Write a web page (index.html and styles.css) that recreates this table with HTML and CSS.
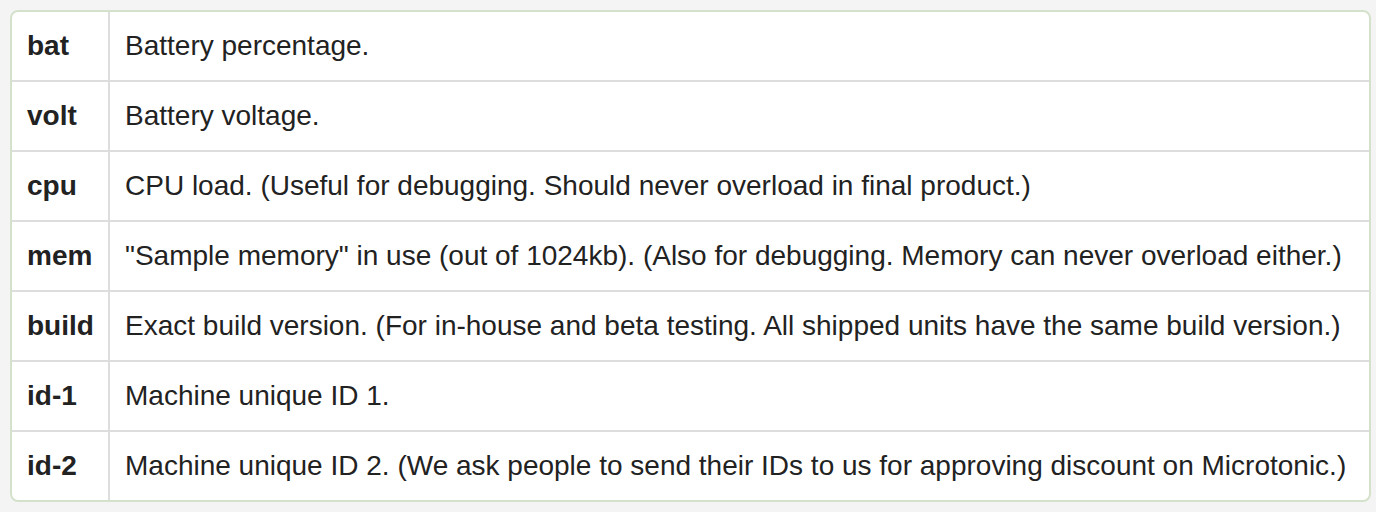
FILE: index.html
```html
<!DOCTYPE html>
<html lang="en">
<head>
<meta charset="utf-8">
<title>Status fields</title>
<link rel="stylesheet" href="styles.css">
</head>
<body>
<div class="box">
  <div class="grid">
    <div class="k">bat</div><div class="v">Battery percentage.</div>
    <div class="k">volt</div><div class="v">Battery voltage.</div>
    <div class="k">cpu</div><div class="v">CPU load. (Useful for debugging. Should never overload in final product.)</div>
    <div class="k">mem</div><div class="v">"Sample memory" in use (out of 1024kb). (Also for debugging. Memory can never overload either.)</div>
    <div class="k">build</div><div class="v">Exact build version. (For in-house and beta testing. All shipped units have the same build version.)</div>
    <div class="k">id-1</div><div class="v">Machine unique ID 1.</div>
    <div class="k">id-2</div><div class="v">Machine unique ID 2. (We ask people to send their IDs to us for approving discount on Microtonic.)</div>
  </div>
</div>
</body>
</html>
```
FILE: styles.css
```css
html, body {
  margin: 0;
  padding: 0;
  background: #f4f4f4;
}
body {
  padding: 10px;
  font-family: "Liberation Sans", Arial, Helvetica, sans-serif;
  color: #222;
}
.box {
  width: 1361px;
  box-sizing: border-box;
  border: 2px solid #d4e2cc;
  border-radius: 8px;
  background: #fff;
  overflow: hidden;
}
.grid {
  display: grid;
  grid-template-columns: 98px 1fr;
}
.k, .v {
  font-size: 28px;
  line-height: 36px;
  padding: 16px 15px;
  white-space: nowrap;
}
.k {
  font-weight: bold;
  border-right: 2px solid #ddd;
}
.k:nth-child(n+3), .v:nth-child(n+3) {
  border-top: 2px solid #ddd;
}
```
